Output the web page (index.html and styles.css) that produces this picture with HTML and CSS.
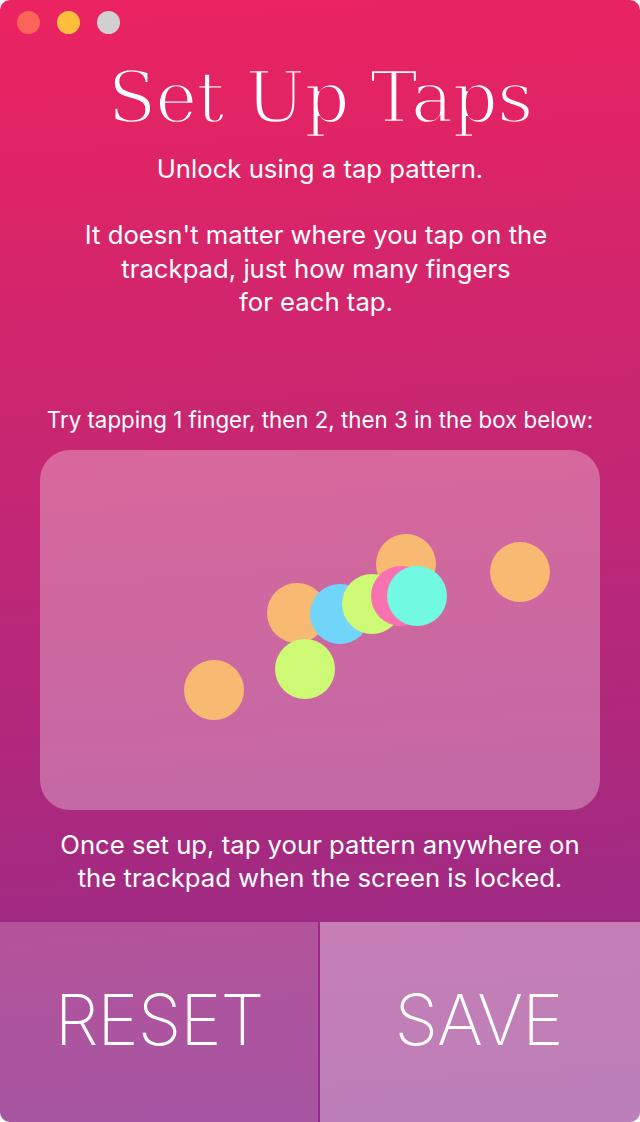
FILE: index.html
```html
<!DOCTYPE html>
<html lang="en">
<head>
    <meta charset="UTF-8">
    <meta name="viewport" content="width=device-width, initial-scale=1.0">
    <title>Set Up Taps</title>
    <link rel="stylesheet" href="styles.css">
</head>
<body>
    <div class="window">
        <div class="lights">
            <span class="light red"></span>
            <span class="light yellow"></span>
            <span class="light grey"></span>
        </div>
        <h1 class="title">Set Up Taps</h1>
        <p class="intro">Unlock using a tap pattern.</p>
        <p class="explain">It doesn't matter where you tap on the<br>trackpad, just how many fingers<br>for each tap.</p>
        <p class="hint">Try tapping 1 finger, then 2, then 3 in the box below:</p>
        <div class="pad">
            <span class="tap orange t1"></span>
            <span class="tap orange t2"></span>
            <span class="tap orange t3"></span>
            <span class="tap orange t4"></span>
            <span class="tap blue t5"></span>
            <span class="tap lime t6"></span>
            <span class="tap lime t7"></span>
            <span class="tap pink t8"></span>
            <span class="tap cyan t9"></span>
        </div>
        <p class="outro">Once set up, tap your pattern anywhere on<br>the trackpad when the screen is locked.</p>
        <div class="actions">
            <button class="reset">RESET</button>
            <button class="save">SAVE</button>
        </div>
    </div>
</body>
</html>
```

FILE: styles.css
```css
*{
    margin: 0;
    padding: 0;
    box-sizing: border-box;
}
body{
    background: #fff;
    font-family: Inter, 'Liberation Sans', Arial, sans-serif;
}
.window{
    width: 640px;
    height: 1122px;
    display: flex;
    flex-direction: column;
    overflow: hidden;
    border-radius: 10px;
    color: #fff;
    text-align: center;
    background: linear-gradient(176deg, #ec2360 0%, #9f2a84 82%, #8f2b8c 100%);
}
.lights{
    display: flex;
    gap: 17px;
    padding: 11px 0 0 16.5px;
    height: 34px;
}
.light{
    width: 23px;
    height: 23px;
    border-radius: 50%;
}
.red{
    background: #fd6459;
}
.yellow{
    background: #fdbf3c;
}
.grey{
    background: #d0d0d0;
}
.title{
    margin-top: 20px;
    height: 88px;
    font-family: 'DejaVu Serif', serif;
    font-size: 71px;
    line-height: 88px;
    font-weight: 400;
    letter-spacing: -1px;
    color: #fff;
    -webkit-text-stroke: 2.3px #e62362;
}
.intro{
    font-size: 25.7px;
    line-height: 34px;
    margin-top: 10px;
}
.explain{
    font-size: 25.7px;
    line-height: 33.5px;
    margin-top: 32px;
    padding-right: 8px;
}
.hint{
    font-size: 22.3px;
    line-height: 30px;
    margin-top: 86px;
}
.pad{
    position: relative;
    flex: none;
    width: 560px;
    height: 360px;
    margin: 15px auto 0;
    border-radius: 30px;
    background: rgba(255, 255, 255, 0.3);
}
.tap{
    position: absolute;
    width: 60px;
    height: 60px;
    border-radius: 50%;
}
.orange{
    background: #f8b972;
}
.blue{
    background: #70d5f8;
}
.lime{
    background: #cdf974;
}
.pink{
    background: #f972b0;
}
.cyan{
    background: #72f9e2;
}
.t1{ left: 450px; top: 92px; }
.t2{ left: 336px; top: 84px; }
.t3{ left: 227px; top: 133px; }
.t4{ left: 144px; top: 210px; }
.t5{ left: 270px; top: 134px; }
.t6{ left: 302px; top: 124px; }
.t7{ left: 235px; top: 189px; }
.t8{ left: 331px; top: 116px; }
.t9{ left: 347px; top: 116px; }
.outro{
    font-size: 25.7px;
    line-height: 33.5px;
    margin-top: 18px;
}
.actions{
    display: flex;
    gap: 2px;
    margin-top: 27px;
    flex: 1;
}
.actions button{
    border: none;
    color: #fff;
    font-family: Inter, sans-serif;
    font-size: 70px;
    font-weight: 250;
    letter-spacing: -1px;
    padding-bottom: 4px;
}
.reset{
    flex: none;
    width: 318px;
    background: rgba(255, 255, 255, 0.2);
}
.save{
    flex: 1;
    padding-right: 3px;
    background: rgba(255, 255, 255, 0.4);
}
```
